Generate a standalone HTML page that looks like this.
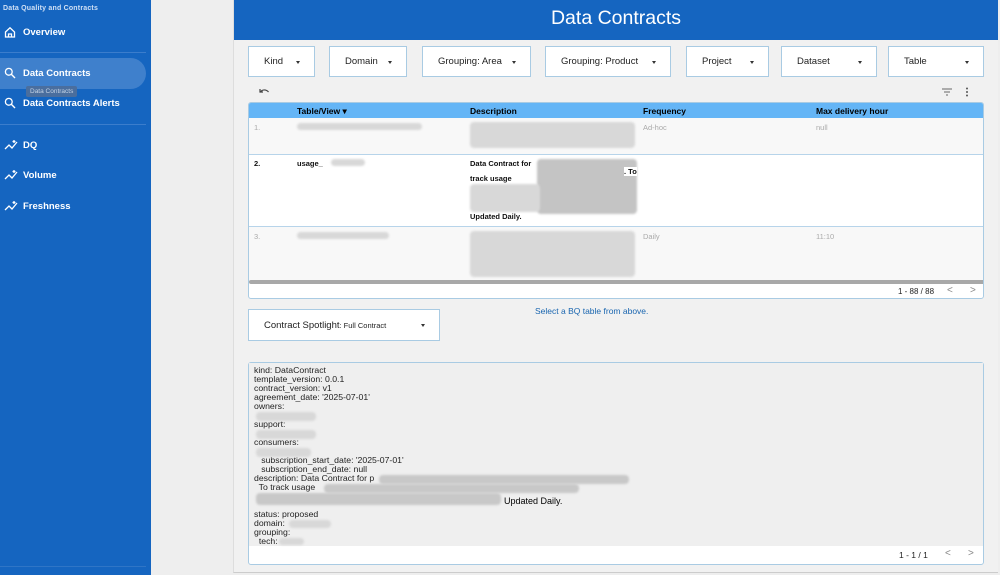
<!DOCTYPE html>
<html><head><meta charset="utf-8"><style>
*{box-sizing:border-box;margin:0;padding:0}
body{width:1000px;height:575px;overflow:hidden;background:#eeeeee;font-family:"Liberation Sans",Arial,sans-serif;position:relative}
.sb{position:absolute;left:0;top:0;width:151px;height:575px;background:#1565c0;color:#fff}
.sb .t{position:absolute;left:3px;top:5px;font-size:7px;font-weight:bold;color:#cfe0f5;letter-spacing:.2px}
.item{position:absolute;left:0;width:146px;height:31px;font-size:9.5px;font-weight:bold;display:flex;align-items:center;padding-left:23px}
.item svg{position:absolute;left:4px;top:9px}
.sep{position:absolute;left:0;width:146px;height:1px;background:#3b7dcc}
.act{background:#3f80cc;border-radius:0 16px 16px 0}
.tip{position:absolute;left:26px;top:86px;background:#4a6e9e;color:#c6d4e6;font-size:6.5px;padding:2px 4px;border-radius:2px}
.main{position:absolute;left:233px;top:0;width:765px;height:573px;background:#f1f1f1;border-left:1px solid #ddd;border-bottom:1px solid #ccc}
.hdr{height:40px;background:#1565c0;color:#fff;font-size:19.5px;text-align:center;line-height:36px}
.dd{position:absolute;top:46px;height:31px;background:#fff;border:1px solid #a9cbe3;font-size:9.5px;color:#222;line-height:30px;padding-left:15px}
.dd:after{content:"";position:absolute;right:14px;top:14px;border:2.5px solid transparent;border-top:3px solid #333}
.tbl{position:absolute;left:14px;top:102px;width:736px;height:197px;background:#fff;border:1px solid #a9cbe3;border-radius:3px;overflow:hidden}
.th{height:15px;background:#64b5f6;font-size:8.5px;font-weight:bold;position:relative}
.th span,.r span{position:absolute}
.r{position:relative;border-bottom:1px solid #b7d4ea;font-size:7.5px}
.blur{position:absolute;background:#d8d8d8;border-radius:4px;filter:blur(1px)}
.code{position:absolute;left:14px;top:362px;width:736px;height:203px;background:#fff;border:1px solid #a9cbe3;border-radius:3px}
.code pre{height:183px;background:#efefef;font-family:"Liberation Sans",sans-serif;font-size:8.7px;line-height:9px;color:#222;padding:3px 5px;overflow:hidden}
</style></head><body>
<div class="sb">
<div class="t">Data Quality and Contracts</div>
<div class="item" style="top:17px"><svg width="12" height="12" viewBox="0 0 12 12"><path d="M1.5 6L6 1.8 10.5 6V11H1.5Z M4.5 11V8H7.5V11" fill="none" stroke="#fff" stroke-width="1.3"/></svg>Overview</div>
<div class="sep" style="top:52px"></div>
<div class="item act" style="top:58px"><svg width="12" height="12" viewBox="0 0 12 12"><circle cx="4.8" cy="4.8" r="3.4" fill="none" stroke="#fff" stroke-width="1.3"/><path d="M7.3 7.3L11 11" stroke="#fff" stroke-width="1.4"/></svg>Data Contracts</div>
<div class="tip">Data Contracts</div>
<div class="item" style="top:88px"><svg width="12" height="12" viewBox="0 0 12 12"><circle cx="4.8" cy="4.8" r="3.4" fill="none" stroke="#fff" stroke-width="1.3"/><path d="M7.3 7.3L11 11" stroke="#fff" stroke-width="1.4"/></svg>Data Contracts Alerts</div>
<div class="sep" style="top:124px"></div>
<div class="item" style="top:130px"><svg width="14" height="12" viewBox="0 0 14 12"><path d="M1 10L5 6 8 9 13 3M10 1v3M8.5 2.5h3" fill="none" stroke="#fff" stroke-width="1.3"/></svg>DQ</div>
<div class="item" style="top:160px"><svg width="14" height="12" viewBox="0 0 14 12"><path d="M1 10L5 6 8 9 13 3M10 1v3M8.5 2.5h3" fill="none" stroke="#fff" stroke-width="1.3"/></svg>Volume</div>
<div class="item" style="top:191px"><svg width="14" height="12" viewBox="0 0 14 12"><path d="M1 10L5 6 8 9 13 3M10 1v3M8.5 2.5h3" fill="none" stroke="#fff" stroke-width="1.3"/></svg>Freshness</div>
<div class="sep" style="top:566px;background:#2f75c6"></div>
</div>
<div class="main">
<div class="hdr">Data Contracts</div>
<div class="dd" style="left:14px;width:67px">Kind</div>
<div class="dd" style="left:95px;width:78px">Domain</div>
<div class="dd" style="left:188px;width:109px">Grouping: Area</div>
<div class="dd" style="left:311px;width:126px">Grouping: Product</div>
<div class="dd" style="left:452px;width:83px">Project</div>
<div class="dd" style="left:547px;width:96px">Dataset</div>
<div class="dd" style="left:654px;width:96px">Table</div>
<svg style="position:absolute;left:24px;top:87px" width="12" height="9" viewBox="0 0 12 9"><path d="M2 2v3h3M2.5 5C4 2.5 8 2 10.5 5" fill="none" stroke="#444" stroke-width="1.2"/></svg>
<svg style="position:absolute;left:707px;top:88px" width="12" height="8"><path d="M1 1h10M3 4h6M5 7h2" stroke="#666" stroke-width="1.1"/></svg>
<svg style="position:absolute;left:731px;top:87px" width="4" height="10"><circle cx="2" cy="1.5" r="1" fill="#555"/><circle cx="2" cy="5" r="1" fill="#555"/><circle cx="2" cy="8.5" r="1" fill="#555"/></svg>
<div class="tbl">
<div class="th"><span style="left:48px;top:3px">Table/View ▾</span><span style="left:221px;top:3px">Description</span><span style="left:394px;top:3px">Frequency</span><span style="left:567px;top:3px">Max delivery hour</span></div>
<div class="r" style="height:37px;background:#f8f8f8;color:#aaa"><span style="left:5px;top:5px">1.</span><div class="blur" style="left:48px;top:5px;width:125px;height:7px"></div><div class="blur" style="left:221px;top:4px;width:165px;height:26px"></div><span style="left:394px;top:5px">Ad-hoc</span><span style="left:567px;top:5px">null</span></div>
<div class="r" style="height:72px;background:#fff;color:#111;font-weight:bold"><span style="left:5px;top:4px">2.</span><span style="left:48px;top:4px">usage_</span><div class="blur" style="left:82px;top:4px;width:34px;height:7px"></div><span style="left:221px;top:4px">Data Contract for</span><div class="blur" style="left:288px;top:4px;width:100px;height:55px;background:#c4c4c4"></div><span style="left:375px;top:12px;background:#fff">. To</span><span style="left:221px;top:19px">track usage</span><div class="blur" style="left:221px;top:29px;width:70px;height:28px"></div><span style="left:221px;top:57px">Updated Daily.</span></div>
<div class="r" style="height:55px;background:#f8f8f8;color:#aaa;border-bottom:none"><span style="left:5px;top:5px">3.</span><div class="blur" style="left:48px;top:5px;width:92px;height:7px"></div><div class="blur" style="left:221px;top:4px;width:165px;height:46px"></div><span style="left:394px;top:5px">Daily</span><span style="left:567px;top:5px">11:10</span></div>
<div style="position:absolute;left:0;top:177px;width:736px;height:4px;background:#a8a8a8;border-radius:2px"></div>
<span style="position:absolute;left:649px;top:184px;font-size:8px;color:#222">1 - 88 / 88</span>
<span style="position:absolute;left:698px;top:182px;font-size:10px;color:#888">&lt;</span>
<span style="position:absolute;left:721px;top:182px;font-size:10px;color:#888">&gt;</span>
</div>
<div style="position:absolute;left:301px;top:306px;font-size:8.5px;color:#1a66b0">Select a BQ table from above.</div>
<div class="dd" style="left:14px;top:309px;width:192px;height:32px;line-height:31px">Contract Spotlight<span style="font-size:7.5px">: Full Contract</span></div>
<div class="code"><pre>kind: DataContract
template_version: 0.0.1
contract_version: v1
agreement_date: '2025-07-01'
owners:

support:

consumers:

   subscription_start_date: '2025-07-01'
   subscription_end_date: null
description: Data Contract for p
  To track usage


status: proposed
domain:
grouping:
  tech:</pre>
<div class="blur" style="left:7px;top:49px;width:60px;height:9px"></div>
<div class="blur" style="left:7px;top:67px;width:60px;height:9px"></div>
<div class="blur" style="left:7px;top:85px;width:55px;height:9px"></div>
<div class="blur" style="left:130px;top:112px;width:250px;height:9px;background:#c8c8c8"></div>
<div class="blur" style="left:75px;top:121px;width:255px;height:9px;background:#c8c8c8"></div>
<div class="blur" style="left:7px;top:130px;width:245px;height:12px;background:#c8c8c8"></div>
<span style="position:absolute;left:255px;top:133px;font-size:9px">Updated Daily.</span>
<div class="blur" style="left:40px;top:157px;width:42px;height:8px"></div>
<div class="blur" style="left:30px;top:175px;width:25px;height:7px"></div>
<span style="position:absolute;left:650px;top:187px;font-size:8.5px;color:#222">1 - 1 / 1</span>
<span style="position:absolute;left:696px;top:185px;font-size:10px;color:#888">&lt;</span>
<span style="position:absolute;left:719px;top:185px;font-size:10px;color:#888">&gt;</span>
</div>
</div>
</body></html>
